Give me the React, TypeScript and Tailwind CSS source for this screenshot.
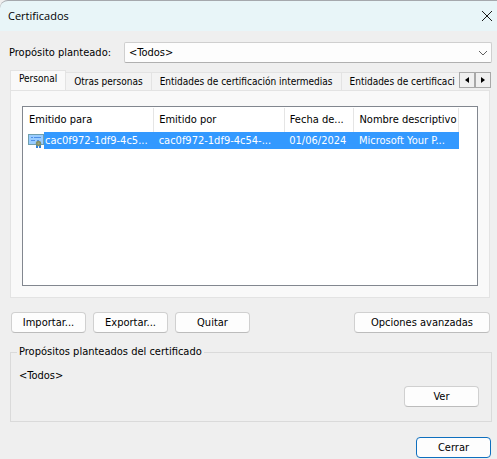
import React, { useState } from "react";
import clsx from "clsx";

interface DialogButtonProps {
  children: React.ReactNode;
  className?: string;
  primary?: boolean;
}

interface Certificate {
  issuedTo: string;
  issuedBy: string;
  expires: string;
  friendlyName: string;
}

const tabs = [
  "Personal",
  "Otras personas",
  "Entidades de certificación intermedias",
  "Entidades de certificaci",
];

const certificates: Certificate[] = [
  {
    issuedTo: "cac0f972-1df9-4c5...",
    issuedBy: "cac0f972-1df9-4c54-...",
    expires: "01/06/2024",
    friendlyName: "Microsoft Your P...",
  },
];

const DialogButton: React.FC<DialogButtonProps> = ({ children, className, primary }) => (
  <button
    type="button"
    className={clsx(
      "h-[21px] rounded-[4px] border bg-[#fdfdfd] text-center",
      primary ? "border-[#0f6fbe]" : "border-[#d0d0d0] border-b-[#bcbcbc]",
      className ?? "w-[75px]"
    )}
  >
    {children}
  </button>
);

const CertificateIcon = () => (
  <svg width="16" height="17" viewBox="0 0 16 17" className="shrink-0" aria-hidden="true">
    <rect x="0.5" y="2.5" width="15" height="10" fill="#99ccff" stroke="#6f9fae" />
    <path d="M3 5.5h2M6 5.5h7M3 8.5h4M9 8.500h2" stroke="#4d8fe8" />
    <path d="M8 12h2v4h-2zM11 12h2v4h-2z" fill="#2f7fd8" />
    <circle cx="10.5" cy="11.5" r="2.7" fill="#80906c" />
    <circle cx="10.5" cy="11.5" r="1" fill="#a5aa78" />
  </svg>
);

const App: React.FC = () => {
  const [activeTab, setActiveTab] = useState(0);

  return (
    <div className="min-h-screen bg-[#efefef] font-['DejaVu_Sans_Condensed','DejaVu_Sans',sans-serif] text-[11px] leading-4 text-black">
      <header className="flex h-[31px] items-center justify-between rounded-tl-lg border-t border-[#a5a8ad] bg-[#e8f5f8] pl-2 pr-1">
        <h1 className="font-['Open_Sans',sans-serif]">Certificados</h1>
        <button type="button" aria-label="Cerrar ventana">
          <svg width="12" height="12" viewBox="0 0 12 12" fill="none" stroke="#1a1a1a">
            <path d="M1 1l10 10M11 1L1 11" />
          </svg>
        </button>
      </header>

      <main className="pt-[11px]">
        <div className="flex items-center pl-[9px] pr-[5px]">
          <label htmlFor="purpose" className="w-[115px] shrink-0">
            Propósito planteado:
          </label>
          <div className="relative flex-1">
            <select
              id="purpose"
              className="block h-[21px] w-full appearance-none rounded-[2px] border border-[#cfcfcf] border-b-[#b0b0b0] bg-[#fdfdfd] pl-1"
            >
              <option>&lt;Todos&gt;</option>
            </select>
            <svg
              width="10"
              height="6"
              viewBox="0 0 10 6"
              fill="none"
              stroke="#606060"
              className="pointer-events-none absolute right-1 top-2"
            >
              <path d="M1 1l4 4 4-4" />
            </svg>
          </div>
        </div>

        <div className="ml-[10px] mr-[6px] mt-[7px] flex items-end">
          <div role="tablist" className="flex min-w-0 flex-1 items-end overflow-hidden text-[10px]">
            {tabs.map((tab, index) => (
              <button
                key={tab}
                type="button"
                role="tab"
                aria-selected={index === activeTab}
                onClick={() => setActiveTab(index)}
                className={clsx(
                  "whitespace-nowrap border-t border-[#e3e3e3]",
                  index === activeTab ? "h-5 border-l bg-[#f9f9f9] pb-[3px]" : "h-[18px] bg-[#f3f3f3]",
                  index < tabs.length - 1 ? "shrink-0 border-r px-2" : "flex-1 pl-2 text-left"
                )}
              >
                {tab}
              </button>
            ))}
          </div>
          <div className="mb-[2px] flex shrink-0">
            <button
              type="button"
              aria-label="Pestañas anteriores"
              className="flex size-4 items-center justify-center border border-[#a8a8a8] bg-[#f0f0f0]"
            >
              <svg width="4" height="6" viewBox="0 0 4 6">
                <path d="M4 0v6L0 3z" />
              </svg>
            </button>
            <button
              type="button"
              aria-label="Pestañas siguientes"
              className="flex size-4 items-center justify-center border border-[#a8a8a8] bg-[#f0f0f0]"
            >
              <svg width="4" height="6" viewBox="0 0 4 6">
                <path d="M0 0v6l4-3z" />
              </svg>
            </button>
          </div>
        </div>

        <section
          role="tabpanel"
          className="ml-[10px] mr-[7px] border border-[#e3e3e3] bg-[#f9f9f9] px-[11px] pb-[11px] pt-[15px]"
        >
          <div className="h-[180px] overflow-hidden border border-[#82878f] bg-white pr-[18px] pt-px">
            <table className="w-full table-fixed border-collapse">
              <colgroup>
                <col className="w-[30%]" />
                <col className="w-[30%]" />
                <col className="w-[16%]" />
                <col className="w-[24%]" />
              </colgroup>
              <thead>
                <tr className="h-6 text-left">
                  {["Emitido para", "Emitido por", "Fecha de...", "Nombre descriptivo"].map((heading) => (
                    <th key={heading} className="whitespace-nowrap border-r border-[#e5e5e5] p-0 pl-[5px] font-normal first:pl-[6px]">
                      {heading}
                    </th>
                  ))}
                </tr>
              </thead>
              <tbody>
                {certificates.map((cert) => (
                  <tr key={cert.issuedTo} className="h-[17px] whitespace-nowrap leading-[17px] text-white">
                    <td className="p-0">
                      <div className="flex items-center pl-[5px]">
                        <CertificateIcon />
                        <span className="flex-1 overflow-hidden bg-[#3399ff] pl-px">{cert.issuedTo}</span>
                      </div>
                    </td>
                    <td className="bg-[#3399ff] p-0 pl-[5px]">{cert.issuedBy}</td>
                    <td className="bg-[#3399ff] p-0 pl-[5px]">{cert.expires}</td>
                    <td className="bg-[#3399ff] p-0 pl-[5px]">{cert.friendlyName}</td>
                  </tr>
                ))}
              </tbody>
            </table>
          </div>
        </section>

        <div className="ml-[11px] mr-[7px] mt-[14px] flex gap-[7px]">
          <DialogButton>Importar...</DialogButton>
          <DialogButton>Exportar...</DialogButton>
          <DialogButton>Quitar</DialogButton>
          <DialogButton className="ml-auto w-[136px]">Opciones avanzadas</DialogButton>
        </div>

        <fieldset className="ml-[10px] mr-[5px] mt-[11px] border border-[#dadada] px-2 pb-[14px]">
          <legend className="-ml-[2px] px-[2px]">Propósitos planteados del certificado</legend>
          <p className="mt-2">&lt;Todos&gt;</p>
          <div className="mt-[2px] flex justify-end pr-1">
            <DialogButton>Ver</DialogButton>
          </div>
        </fieldset>

        <footer className="mt-[15px] flex justify-end pr-[6px]">
          <DialogButton primary>Cerrar</DialogButton>
        </footer>
      </main>
    </div>
  );
};

export default App;
